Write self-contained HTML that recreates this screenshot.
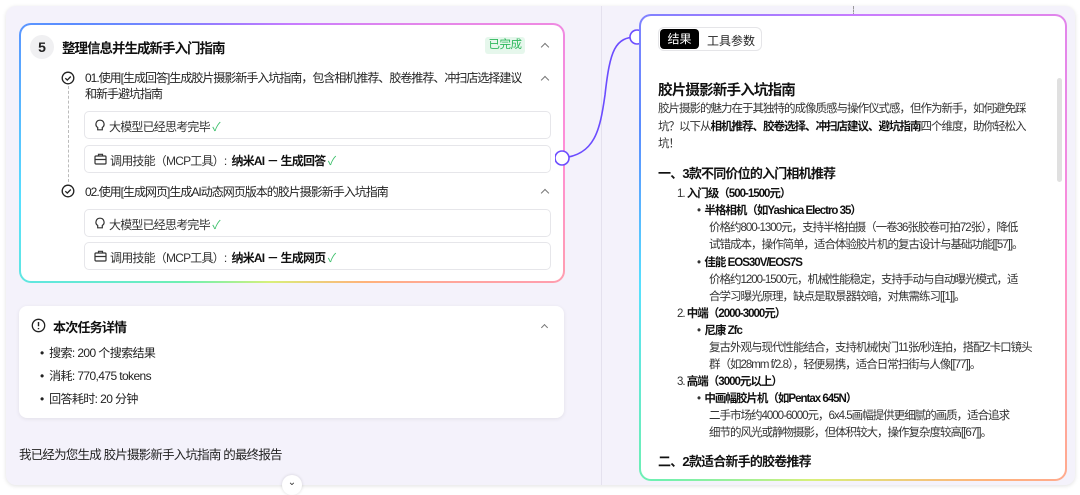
<!DOCTYPE html>
<html><head><meta charset="utf-8"><style>
*{margin:0;padding:0;box-sizing:border-box}
body{width:1080px;height:491px;background:#fff;font-family:"Liberation Sans","Noto Sans CJK SC",sans-serif;color:#222;position:relative;overflow:hidden}
.a{position:absolute;white-space:nowrap}
.outer{position:absolute;left:6px;top:6px;width:1069px;height:479px;background:#f4f2fb;border-radius:10px;box-shadow:0 1px 4px rgba(0,0,0,.12)}
.gb{position:absolute;border-radius:12px;padding:2px;background:conic-gradient(from 0deg,#c77cff,#ff8fd6 90deg,#ffb27a 150deg,#d8f07a 190deg,#6ff0b0 220deg,#57e0ff 260deg,#5a8cff 300deg,#9a7bff 330deg,#c77cff)}
.gb>div{width:100%;height:100%;background:#fff;border-radius:10px;position:relative}
.box{position:absolute;left:84px;width:467px;height:28px;border:1px solid #e6e6ea;border-radius:5px;background:#fff;font-size:12px;color:#333;letter-spacing:-0.8px}
.chev{position:absolute;width:6px;height:6px;border-left:1.4px solid #777;border-top:1.4px solid #777;transform:rotate(45deg)}
.ck{color:#3bbf6a}
.r{font-size:11.5px;color:#333;letter-spacing:-1px}
.b{font-weight:bold;color:#111}
.ic{position:absolute;left:9px;top:7px}
</style></head><body>
<div class="outer"></div>
<div class="a" style="left:601px;top:6px;width:1px;height:479px;background:#e4e1ee"></div>
<div class="a" style="left:853px;top:6px;width:0;height:10px;border-left:1px dashed #999"></div>

<div class="gb" style="left:19px;top:23px;width:546px;height:260px"><div></div></div>
<div class="a" style="left:30px;top:35px;width:24px;height:24px;border-radius:12px;background:#f0f0f2;font-size:14px;font-weight:bold;text-align:center;line-height:24px">5</div>
<div class="a" style="left:62px;top:37px;font-size:13.5px;font-weight:bold;color:#111;letter-spacing:-1px">整理信息并生成新手入门指南</div>
<div class="a" style="left:485px;top:37px;width:40px;height:17px;background:#e6f7ec;border-radius:3px;color:#2eb85c;font-size:11.5px;text-align:center;line-height:17px;letter-spacing:-0.5px">已完成</div>
<div class="chev" style="left:542px;top:44px"></div>

<svg class="a" style="left:61px;top:71px" width="14" height="14" viewBox="0 0 14 14"><circle cx="7" cy="7" r="5.8" fill="none" stroke="#222" stroke-width="1.3"/><path d="M4.3 7.2l2 1.9 3.5-3.6" fill="none" stroke="#222" stroke-width="1.3"/></svg>
<div class="a" style="left:68px;top:86px;height:96px;border-left:1px dashed #bbb"></div>
<div class="a" style="left:85px;top:70px;font-size:12px;line-height:16px;color:#222;letter-spacing:-1px">01.使用[生成回答]生成胶片摄影新手入坑指南，包含相机推荐、胶卷推荐、冲扫店选择建议<br>和新手避坑指南</div>
<div class="chev" style="left:542px;top:77px"></div>
<div class="box" style="top:111px"><svg class="ic" width="12" height="13" viewBox="0 0 12 13"><path d="M6 1.2a4 4 0 0 0-2.3 7.3v2.3h4.6V8.5A4 4 0 0 0 6 1.2z" fill="none" stroke="#333" stroke-width="1.2"/></svg><span class="a" style="left:24px;top:6px">大模型已经思考完毕 <span class="ck">✓</span></span></div>
<div class="box" style="top:145px"><svg class="ic" width="13" height="12" viewBox="0 0 13 12"><rect x="1" y="3" width="11" height="8" rx="1" fill="none" stroke="#333" stroke-width="1.2"/><path d="M4.5 3V1.3h4V3M1 6.5h11" fill="none" stroke="#333" stroke-width="1.2"/></svg><span class="a" style="left:25px;top:6px">调用技能（MCP工具）: &nbsp;<b style="color:#111">纳米AI － 生成回答</b> <span class="ck">✓</span></span></div>
<svg class="a" style="left:61px;top:184px" width="14" height="14" viewBox="0 0 14 14"><circle cx="7" cy="7" r="5.8" fill="none" stroke="#222" stroke-width="1.3"/><path d="M4.3 7.2l2 1.9 3.5-3.6" fill="none" stroke="#222" stroke-width="1.3"/></svg>
<div class="a" style="left:85px;top:183px;font-size:12px;color:#222;letter-spacing:-1px">02.使用[生成网页]生成AI动态网页版本的胶片摄影新手入坑指南</div>
<div class="chev" style="left:542px;top:190px"></div>
<div class="box" style="top:209px"><svg class="ic" width="12" height="13" viewBox="0 0 12 13"><path d="M6 1.2a4 4 0 0 0-2.3 7.3v2.3h4.6V8.5A4 4 0 0 0 6 1.2z" fill="none" stroke="#333" stroke-width="1.2"/></svg><span class="a" style="left:24px;top:6px">大模型已经思考完毕 <span class="ck">✓</span></span></div>
<div class="box" style="top:242px"><svg class="ic" width="13" height="12" viewBox="0 0 13 12"><rect x="1" y="3" width="11" height="8" rx="1" fill="none" stroke="#333" stroke-width="1.2"/><path d="M4.5 3V1.3h4V3M1 6.5h11" fill="none" stroke="#333" stroke-width="1.2"/></svg><span class="a" style="left:25px;top:6px">调用技能（MCP工具）: &nbsp;<b style="color:#111">纳米AI － 生成网页</b> <span class="ck">✓</span></span></div>

<svg class="a" style="left:555px;top:25px" width="95" height="145" viewBox="0 0 95 145"><path d="M7 133 C40 130 45 105 50 70 C55 25 60 12 82 12" fill="none" stroke="#6b4cff" stroke-width="1.6"/><circle cx="7" cy="133" r="7" fill="#fff" stroke="#6b4cff" stroke-width="1.6"/><circle cx="82" cy="12" r="7" fill="#fff" stroke="#6b4cff" stroke-width="1.6"/></svg>

<div class="a" style="left:19px;top:306px;width:545px;height:112px;background:#fff;border-radius:8px;box-shadow:0 1px 4px rgba(0,0,0,.08)"></div>
<svg class="a" style="left:31px;top:318px" width="15" height="15" viewBox="0 0 15 15"><circle cx="7.5" cy="7.5" r="6.2" fill="none" stroke="#222" stroke-width="1.3"/><path d="M7.5 4v4.3M7.5 10v1.2" stroke="#222" stroke-width="1.4"/></svg>
<div class="a" style="left:53px;top:317px;font-size:13px;font-weight:bold;color:#111;letter-spacing:-0.8px">本次任务详情</div>
<div class="chev" style="left:542px;top:325px;width:5px;height:5px"></div>
<div class="a" style="left:40px;top:342px;font-size:12px;line-height:23px;color:#222;letter-spacing:-0.6px">•&nbsp; 搜索: 200 个搜索结果<br>•&nbsp; 消耗: 770,475 tokens<br>•&nbsp; 回答耗时: 20 分钟</div>
<div class="a" style="left:19px;top:444px;font-size:12.5px;color:#222;letter-spacing:-0.8px">我已经为您生成 胶片摄影新手入坑指南 的最终报告</div>
<div class="a" style="left:282px;top:475px;width:20px;height:20px;border-radius:10px;background:#fff;box-shadow:0 0 3px rgba(0,0,0,.15);font-size:10px;text-align:center;line-height:16px;color:#333">⌄</div>

<div class="gb" style="left:639px;top:14px;width:428px;height:467px"><div></div></div>
<div class="a" style="left:658px;top:27px;width:104px;height:24px;border:1px solid #e5e5e8;border-radius:6px;background:#fff"></div>
<div class="a" style="left:660px;top:29px;width:39px;height:20px;background:#000;border-radius:4px;color:#fff;font-size:12px;text-align:center;line-height:20px">结果</div>
<div class="a" style="left:707px;top:32px;font-size:12px;color:#222">工具参数</div>
<div class="a" style="left:1057px;top:78px;width:5px;height:104px;background:#e0e0e0;border-radius:3px"></div>

<div class="a" style="left:658px;top:79px;font-size:14.5px;font-weight:bold;color:#111;letter-spacing:-0.8px">胶片摄影新手入坑指南</div>
<div class="a r" style="left:658px;top:101px;line-height:17.5px">胶片摄影的魅力在于其独特的成像质感与操作仪式感，但作为新手，如何避免踩<br>坑？以下从<span class="b">相机推荐、胶卷选择、冲扫店建议、避坑指南</span>四个维度，助你轻松入<br>坑！</div>
<div class="a" style="left:658px;top:163px;font-size:13px;font-weight:bold;color:#111;letter-spacing:-0.8px">一、3款不同价位的入门相机推荐</div>
<div class="a r" style="left:677px;top:186px;line-height:17px">1. <span class="b">入门级（500-1500元）</span></div>
<div class="a r" style="left:697px;top:203px;line-height:17.2px">
<div>•&nbsp; <span class="b">半格相机（如Yashica Electro 35）</span></div>
<div style="padding-left:12px">价格约800-1300元，支持半格拍摄（一卷36张胶卷可拍72张），降低<br>试错成本，操作简单，适合体验胶片机的复古设计与基础功能[[57]]。</div>
<div>•&nbsp; <span class="b">佳能 EOS30V/EOS7S</span></div>
<div style="padding-left:12px">价格约1200-1500元，机械性能稳定，支持手动与自动曝光模式，适<br>合学习曝光原理，缺点是取景器较暗，对焦需练习[[1]]。</div>
</div>
<div class="a r" style="left:677px;top:306px;line-height:17px">2. <span class="b">中端（2000-3000元）</span></div>
<div class="a r" style="left:697px;top:323px;line-height:17.2px">
<div>•&nbsp; <span class="b">尼康 Zfc</span></div>
<div style="padding-left:12px">复古外观与现代性能结合，支持机械快门11张/秒连拍，搭配Z卡口镜头<br>群（如28mm f/2.8），轻便易携，适合日常扫街与人像[[77]]。</div>
</div>
<div class="a r" style="left:677px;top:374px;line-height:17px">3. <span class="b">高端（3000元以上）</span></div>
<div class="a r" style="left:697px;top:391px;line-height:17.2px">
<div>•&nbsp; <span class="b">中画幅胶片机（如Pentax 645N）</span></div>
<div style="padding-left:12px">二手市场约4000-6000元，6x4.5画幅提供更细腻的画质，适合追求<br>细节的风光或静物摄影，但体积较大，操作复杂度较高[[67]]。</div>
</div>
<div class="a" style="left:658px;top:451px;font-size:13px;font-weight:bold;color:#111;letter-spacing:-0.8px">二、2款适合新手的胶卷推荐</div>
</body></html>
